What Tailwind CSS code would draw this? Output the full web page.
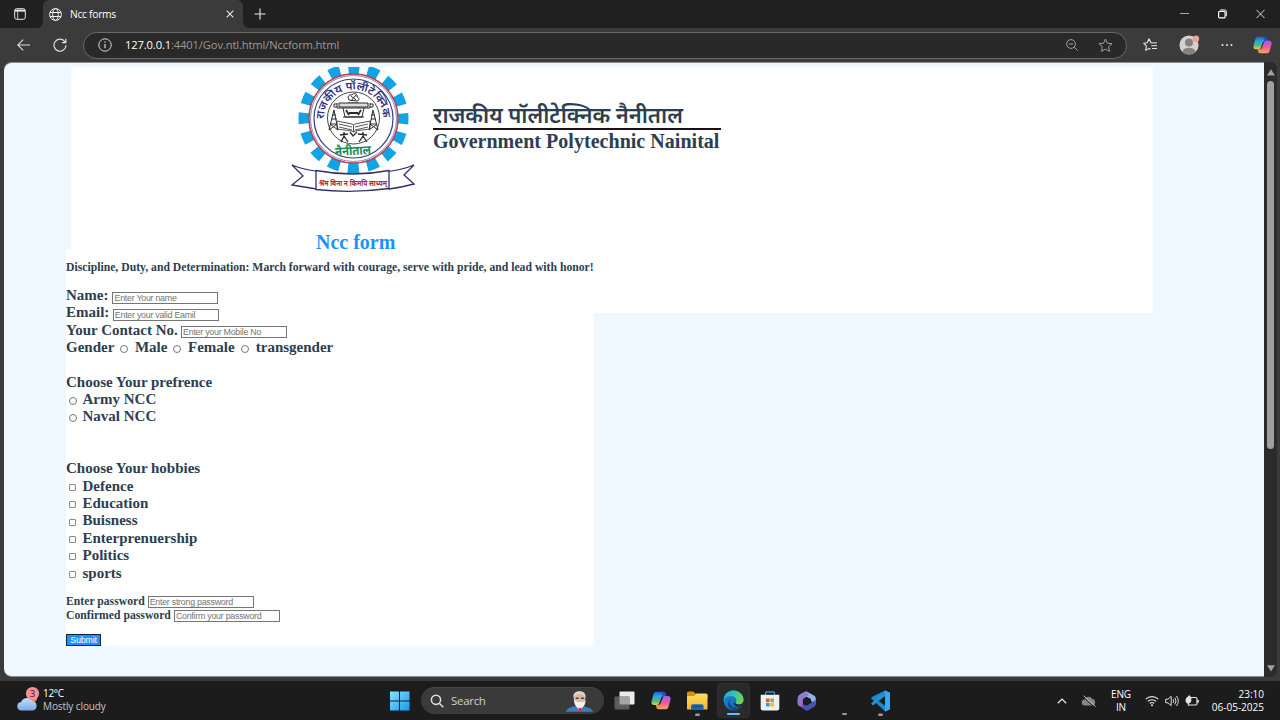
<!DOCTYPE html>
<html lang="en">
<head>
<meta charset="utf-8">
<title>Ncc forms</title>
<script src="https://cdn.jsdelivr.net/npm/@tailwindcss/browser@4"></script>
</head>
<body class="w-[1280px] h-[720px] overflow-hidden flex flex-col bg-[#3b3b3b] font-['Open_Sans','Noto_Sans',sans-serif] text-white">

<!-- Tab strip -->
<div class="h-7 shrink-0 bg-[#202020] flex items-center">
  <div class="w-[43px] h-7 bg-[#3b3b3b]"><div class="w-[43px] h-7 bg-[#202020] rounded-br-md flex items-center justify-end pr-[17px]">
    <svg class="w-3 h-3" viewBox="0 0 12 12" fill="none" stroke="#e8e8e8"><rect x=".7" y=".7" width="10.6" height="10.6" rx="2"/><path d="M1 2.6h10" stroke-width="2"/><path d="M3.7 3v8" stroke-width=".8"/></svg>
  </div></div>
  <div class="w-[200px] h-7 bg-[#3b3b3b] rounded-t-md flex items-center pl-1.5 pr-[9px]">
    <svg class="w-[13px] h-[13px]" viewBox="0 0 13 13" fill="none" stroke="#f0f0f0"><circle cx="6.5" cy="6.5" r="5.9"/><ellipse cx="6.5" cy="6.5" rx="2.8" ry="5.9"/><path d="M1 4.5h11M1 8.5h11"/></svg>
    <span class="ml-2 text-[10.300px] tracking-[-0.300px] leading-3 whitespace-nowrap">Ncc forms</span>
    <svg class="ml-auto w-2 h-2" viewBox="0 0 8 8" stroke="#e8e8e8" stroke-width="1.1"><path d="M.7.7l6.6 6.6M7.3.7L.7 7.3"/></svg>
  </div>
  <div class="w-[30px] h-7 bg-[#3b3b3b]"><div class="h-7 bg-[#202020] rounded-bl-md flex items-center justify-center pl-1">
    <svg class="w-3 h-3" viewBox="0 0 12 12" stroke="#e8e8e8" stroke-width="1.1"><path d="M6 .5v11M.5 6h11"/></svg>
  </div></div>
  <div class="ml-auto flex items-center gap-[29px] pr-[15px]">
    <svg class="w-[9px] h-[10px]" viewBox="0 0 9 10" stroke="#a8a8a8"><path d="M0 4.5h9"/></svg>
    <svg class="w-[9px] h-[10px]" viewBox="0 0 9 10" fill="none" stroke="#fff" stroke-width="1.2"><rect x=".6" y="2.400" width="6.500" height="6.500" rx="1"/><path d="M2.200.9h4.700q1.500 0 1.500 1.500v4.700" stroke-width=".9"/></svg>
    <svg class="w-[9px] h-[10px]" viewBox="0 0 9 10" stroke="#d8d8d8"><path d="M.5.9l8 8.2M8.5.9l-8 8.2"/></svg>
  </div>
</div>

<!-- Toolbar -->
<div class="h-[34px] shrink-0 bg-[#3b3b3b] flex items-center">
  <svg class="ml-[17px] w-[13px] h-[12px]" viewBox="0 0 13 12" fill="none" stroke="#e0e0e0" stroke-width="1.1"><path d="M13 6H.8M6.2.6L.8 6l5.4 5.4"/></svg>
  <svg class="ml-[23px] w-[14px] h-[14px]" viewBox="0 0 14 14" fill="none" stroke="#e0e0e0" stroke-width="1.2"><path d="M12.2 4.2A6 6 0 1 0 13 7.2M12.8.8v3.8H9"/></svg>
  <div class="ml-4 w-[1044px] h-[27px] rounded-full border border-[#6a6a6a] bg-[#292929] flex items-center pl-[14px] pr-[13px]">
    <svg class="w-[14px] h-[14px]" viewBox="0 0 14 14" fill="none" stroke="#d8d8d8"><circle cx="7" cy="7" r="6.2"/><path d="M7 6v4.3M7 3.6v1.2" stroke-width="1.2"/></svg>
    <span class="ml-[13px] text-[11.200px] tracking-[-0.135px] whitespace-nowrap text-[#9a9a9a] w-[215px]"><span class="text-white">127.0.0.1</span>:4401/Gov.ntl.html/Nccform.html</span>
    <svg class="ml-auto w-3 h-3" viewBox="0 0 12 12" fill="none" stroke="#a0a0a0"><circle cx="5" cy="5" r="4.4"/><path d="M8.2 8.2l3.4 3.4M2.8 5h4.4"/></svg>
    <svg class="ml-5 w-[15px] h-[15px]" viewBox="0 0 15 15" fill="none" stroke="#a0a0a0"><path d="M7.5 1l1.9 4.2 4.6.5-3.4 3.1.9 4.6-4-2.3-4 2.3.9-4.6L1 5.700l4.600-.5z" stroke-linejoin="round"/></svg>
  </div>
  <svg class="ml-4 w-[15px] h-[14px]" viewBox="0 0 15 14" fill="none" stroke="#e6e6e6" stroke-linejoin="round"><path d="M9 5L7.900 4.700 6 .8 4.300 4.700.7 5.200l2.700 2.900-.6 4.300L6 10.400l1.600.8" stroke-width="1.100"/><path d="M8.800 4.900H14M8.300 7.700H14M9 10.500h5"/></svg>
  <svg class="ml-[21px] w-[22px] h-[21px]" viewBox="0 0 22 21"><circle cx="10" cy="10" r="9.600" fill="#d4d0cc"/><circle cx="10" cy="7.500" r="4" fill="#85817d"/><path d="M3.500 16.800a6.600 5 0 0 1 13 0A9.600 9.600 0 0 1 3.500 16.800z" fill="#85817d"/><circle cx="17" cy="3.800" r="3.200" fill="#f2a09a"/></svg>
  <svg class="ml-5 w-3 h-3" viewBox="0 0 12 12" fill="#eee"><circle cx="1.500" cy="6" r="1"/><circle cx="6" cy="6" r="1"/><circle cx="10.500" cy="6" r="1"/></svg>
  <svg class="ml-5 w-[19px] h-[18px] shrink-0" viewBox="0 0 19 18"><defs>
    <linearGradient id="cpA" x1="0" y1="0" x2="0" y2="1"><stop offset="0" stop-color="#1b62d8"/><stop offset=".35" stop-color="#25a8dc"/><stop offset=".7" stop-color="#52b982"/><stop offset="1" stop-color="#e8cf3a"/></linearGradient>
    <linearGradient id="cpB" x1="0" y1="0" x2="0" y2="1"><stop offset="0" stop-color="#a35cf0"/><stop offset=".5" stop-color="#ee5a9c"/><stop offset="1" stop-color="#fba25c"/></linearGradient></defs>
    <path d="M5 .8h6.700c1.800 0 2 .9 2.400 2.500L14.500 5h-2.600c-1.500 0-2 .7-2.400 2L8 11.200c-.6 1.500-1.200 2-2.500 2H3c-2.300 0-3-1.600-2.400-3.800L2.300 3.300C2.800 1.600 3.500.8 5 .8z" fill="url(#cpA)"/>
    <path d="M9.700.8h2c1.800 0 2 .9 2.400 2.500L14.500 5h-3z" fill="#1b50bd"/>
    <path d="M14 17.200H7.300c-1.800 0-2-.9-2.400-2.500l-.4-1.500h2.300c1.500 0 2-.7 2.400-2L11 6.800c.6-1.500 1.200-2 2.500-2H16c2.300 0 3 1.600 2.400 3.800l-1.700 6.100c-.5 1.700-1.200 2.500-2.700 2.500z" fill="url(#cpB)"/></svg>
</div>

<!-- Page viewport -->
<div class="h-[619px] shrink-0 flex pl-1 bg-[#3b3b3b]">
  <div class="w-[1260px] h-[615px] rounded-l-lg bg-[#f0f8ff] overflow-hidden pt-[5px] border-t border-b border-[#8b8e91] font-['Liberation_Serif',serif] font-bold text-[#2c3e50]">
    <header class="ml-[67px] w-[1082px] h-[246px] bg-white flex pl-[220px] -mt-px">
      <svg class="w-[124px] h-[125px] shrink-0" viewBox="0 0 124 125">
        <circle cx="62.500" cy="51.500" r="49.500" fill="none" stroke="#10a4e4" stroke-width="11" stroke-dasharray="11 8.438" stroke-dashoffset="5.500"/>
        <circle cx="62.500" cy="51.500" r="44.500" fill="#fff" stroke="#b34654" stroke-width="1.500"/>
        <circle cx="62.500" cy="51.500" r="43" fill="none" stroke="#3c3c85" stroke-width=".6"/>
        <circle cx="62.500" cy="51.500" r="39.500" fill="none" stroke="#3c3c85" stroke-width="1.200"/>
        <circle cx="62.500" cy="51" r="26" fill="#fff" stroke="#333" stroke-width=".9"/>
        <path id="arc" d="M35.500 64A29.500 29.500 0 1 1 89.500 64" fill="none"/>
        <text font-family="Noto Sans, sans-serif" font-size="11.300" font-weight="600" fill="#30307c"><textPath href="#arc" startOffset="12">राजकीय पॉलीटेक्निक</textPath></text>
        <g fill="none" stroke="#2c2c2c" stroke-width="1">
          <path d="M46 36v5h33v-5M46 37h-3v3h3M79 37h3v3h-3M52 41l2 9h17l2-9M57 36h11v5M52 50h21" />
          <path d="M48 36h29v4H48z" fill="#ddd"/>
          <path d="M58 46h9M55 43l3 5M70 43l-3 5" stroke-width="1.800"/>
          <path d="M58 33c-2-3 0-6 3-5 2-3 6-1 5 2 3 1 2 4 0 4zM60 29l5 4M65 28l-5 6"/>
          <path d="M46 54l15 3 1.500 1 1.500-1 15-3v8l-15 2-1.500 1-1.500-1-15-2zM62.500 58v7M48 57l13 3M48 60l13 3M77 57l-13 3M77 60l-13 3" stroke-width=".8"/>
          <path d="M43 43l-5 20M43 43l4 20M39 57h7M40 52h6M41 48h4M39 57l8 6M38 63l8-6M82 43l-4 20M82 43l5 20M79 57h7M80 52h5M80 48h4M79 57l8 6M78 63l8-6"/>
          <path d="M53 65v4l-3 6M53 69l4 6M49 68l8-1M72 65v4l-4 6M72 69l4 6M67 67l9 1M59 65l3 4 4-4" stroke-width="1.300"/>
        </g>
        <text x="44" y="88" transform="rotate(-3 62 84)" font-family="Noto Sans, sans-serif" font-size="12.500" font-weight="700" fill="#168a58" textLength="36" lengthAdjust="spacingAndGlyphs">नैनीताल</text>
        <g fill="#fff" stroke="#31306f" stroke-width="1.300" stroke-linejoin="miter">
          <path d="M1 98q14 6 34 7l-9 17Q13 120 1 118l11-9z"/>
          <path d="M123 98q-14 6-33 7l8 17q14-2 25-5l-10-9z"/>
          <path d="M25 103.500q37 7 73 0v18q-37 5-73 1z"/>
        </g>
        <text x="28" y="119" font-family="Noto Sans, sans-serif" font-size="8.500" font-weight="700" fill="#a52d37" textLength="68" lengthAdjust="spacingAndGlyphs">श्रम बिना न किमपि साध्यम्</text>
      </svg>
      <div class="ml-[18px] pt-[35px]">
        <div class="w-[288px] h-[28px] border-b-2 border-[#1a1018] text-[22px] leading-[27px] whitespace-nowrap font-semibold tracking-[-0.100px]"><span class="font-['Noto_Sans_Devanagari','Noto_Sans',sans-serif]">राजकीय पॉलीटेक्निक नैनीताल</span></div>
        <div class="-mt-px text-[20px] tracking-[0.030px] leading-[24px] whitespace-nowrap">Government Polytechnic Nainital</div>
      </div>
    </header>

    <form class="relative flow-root -mt-[64px] ml-[62px] w-[528px] h-[397px] bg-white text-[15px] leading-[17.350px] whitespace-nowrap">
      <h1 class="pl-[250px] -mt-[19px] pt-px text-[20px] leading-[22px] text-[#1e90ff]">Ncc form</h1>
      <p class="mt-[8px] text-[11.700px] leading-[14px]">Discipline, Duty, and Determination: March forward with courage, serve with pride, and lead with honor!</p>
      <div class="mt-[12px] h-[17.350px] flex items-center">Name:<span class="ml-1 mt-1 w-[106px] h-[12px] border border-[#767676] bg-white pl-px font-['Liberation_Sans',sans-serif] font-normal text-[8.900px] tracking-[-0.270px] leading-[10px] text-[#757575]">Enter Your name</span></div>
      <div class="h-[17.350px] flex items-center">Email:<span class="ml-[3.500px] mt-1 w-[106px] h-[12px] border border-[#767676] bg-white pl-px font-['Liberation_Sans',sans-serif] font-normal text-[8.900px] tracking-[-0.270px] leading-[10px] text-[#757575]">Enter your valid Eamil</span></div>
      <div class="h-[17.350px] flex items-center">Your Contact No.<span class="ml-[3.300px] mt-1 w-[106px] h-[12px] border border-[#767676] bg-white pl-px font-['Liberation_Sans',sans-serif] font-normal text-[8.900px] tracking-[-0.270px] leading-[10px] text-[#757575]">Enter your Mobile No</span></div>
      <div class="h-[17.350px] flex items-center">Gender<i class="ml-1.5 mr-[6.600px] mt-0.5 w-2 h-2 rounded-full border border-[#767676]"></i>Male<i class="ml-1.5 mr-[6.600px] mt-0.5 w-2 h-2 rounded-full border border-[#767676]"></i>Female<i class="ml-[6.500px] mr-[6.600px] mt-0.5 w-2 h-2 rounded-full border border-[#767676]"></i>transgender</div>
      <div class="mt-[17.350px] h-[17.350px]">Choose Your prefrence</div>
      <div class="h-[17.350px] flex items-center"><i class="ml-[3px] mr-[5.500px] mt-0.5 w-2 h-2 rounded-full border border-[#767676]"></i>Army NCC</div>
      <div class="h-[17.350px] flex items-center"><i class="ml-[3px] mr-[5.500px] mt-0.5 w-2 h-2 rounded-full border border-[#767676]"></i>Naval NCC</div>
      <div class="mt-[34.700px] h-[17.350px]">Choose Your hobbies</div>
      <div class="h-[17.350px] flex items-center"><i class="ml-[3px] mr-[6.500px] mt-0.5 w-[7px] h-[7px] rounded-[1px] border border-[#8a8a8a]"></i>Defence</div>
      <div class="h-[17.350px] flex items-center"><i class="ml-[3px] mr-[6.500px] mt-0.5 w-[7px] h-[7px] rounded-[1px] border border-[#8a8a8a]"></i>Education</div>
      <div class="h-[17.350px] flex items-center"><i class="ml-[3px] mr-[6.500px] mt-0.5 w-[7px] h-[7px] rounded-[1px] border border-[#8a8a8a]"></i>Buisness</div>
      <div class="h-[17.350px] flex items-center"><i class="ml-[3px] mr-[6.500px] mt-0.5 w-[7px] h-[7px] rounded-[1px] border border-[#8a8a8a]"></i>Enterprenuership</div>
      <div class="h-[17.350px] flex items-center"><i class="ml-[3px] mr-[6.500px] mt-0.5 w-[7px] h-[7px] rounded-[1px] border border-[#8a8a8a]"></i>Politics</div>
      <div class="h-[17.350px] flex items-center"><i class="ml-[3px] mr-[6.500px] mt-0.5 w-[7px] h-[7px] rounded-[1px] border border-[#8a8a8a]"></i>sports</div>
      <div class="mt-[13px] h-[14px] flex items-center text-[11.700px]">Enter password<span class="ml-[3px] mt-px w-[106px] h-[12px] border border-[#767676] bg-white pl-px font-['Liberation_Sans',sans-serif] font-normal text-[8.900px] tracking-[-0.270px] leading-[10px] text-[#757575]">Enter strong password</span></div>
      <div class="h-[14px] flex items-center text-[11.700px]">Confirmed password<span class="ml-[3px] mt-px w-[106px] h-[12px] border border-[#767676] bg-white pl-px font-['Liberation_Sans',sans-serif] font-normal text-[8.900px] tracking-[-0.270px] leading-[10px] text-[#757575]">Confirm your password</span></div>
      <div class="mt-[11px] w-[35px] h-[12px] border border-[#10243a] bg-[#1e90ff] text-center font-['Liberation_Sans',sans-serif] font-normal text-[8.900px] tracking-[-0.200px] leading-[10px] text-white">Submit</div>
    </form>
  </div>
  <div class="w-[13px] h-[615px] bg-[#2b2b2b] rounded-r-md flex flex-col items-center">
    <svg class="mt-[7px] w-2 h-[7px]" viewBox="0 0 8 7" fill="#9f9f9f"><path d="M4 .3L8 6.500H0z"/></svg>
    <div class="mt-[5px] w-[7px] h-[368px] rounded-full bg-[#9f9f9f]"></div>
    <svg class="mt-auto mb-[5px] w-2 h-[7px]" viewBox="0 0 8 7" fill="#9f9f9f"><path d="M4 6.500L8 .3H0z"/></svg>
  </div>
</div>

<!-- Taskbar -->
<div class="h-[39px] shrink-0 bg-[#1c1c1c] flex items-center">
  <div class="w-[389px] flex items-center pl-4">
    <svg class="-mt-[5px] w-6 h-[26px]" viewBox="0 0 24 26"><defs><linearGradient id="cl" x1="0" y1="0" x2="0" y2="1"><stop offset="0" stop-color="#c6dcf8"/><stop offset="1" stop-color="#7fabe8"/></linearGradient></defs><circle cx="17" cy="13" r="4" fill="#f08a38"/><path d="M5 25.500a4.300 4.300 0 0 1 0-8.500A6.500 6.500 0 0 1 16.500 16a4.800 4.800 0 0 1 0 9.500z" fill="url(#cl)"/><circle cx="16.500" cy="8.500" r="6.600" fill="#f78f98"/><text x="16.500" y="12" text-anchor="middle" font-family="Open Sans, sans-serif" font-size="9.500" fill="#38181b">3</text></svg>
    <div class="ml-[3px] -mt-px text-[10px] tracking-[-0.100px] leading-[13.500px] whitespace-nowrap"><div class="tracking-[-0.300px]">12°C</div><div class="text-[#c6c6c6]">Mostly cloudy</div></div>
  </div>
  <svg class="w-[21px] h-5" viewBox="0 0 21 20"><defs><linearGradient id="wn" x1="0" y1="0" x2="1" y2="1"><stop offset="0" stop-color="#83e4ff"/><stop offset="1" stop-color="#1698f0"/></linearGradient></defs><path d="M1 .5h9v9H1zM11 .5h9.500v9H11zM1 10.500h9v9H1zM11 10.500h9.500v9H11z" fill="url(#wn)"/></svg>
  <div class="ml-[11px] w-[183px] h-[27px] rounded-full bg-[#3a3a3a] border-t border-[#484848] flex items-center pl-[9px] pr-2.5">
    <svg class="w-[14px] h-[14px]" viewBox="0 0 14 14" fill="none" stroke="#e0e0e0" stroke-width="1.500"><circle cx="6" cy="5.800" r="4.600"/><path d="M9.300 9.300l4 4"/></svg>
    <span class="ml-[7px] text-[11.500px] tracking-[-0.300px] text-[#d0d0d0]">Search</span>
    <svg class="ml-auto w-[29px] h-[23px]" viewBox="0 0 31 24"><path d="M1 23c1-4 5-5 9-6h9c5 1 10 2 11 6z" fill="#3d7dbd"/><path d="M12 16l3.500 7 4-7z" fill="#f1f1f1"/><path d="M14.800 18h2l.8 5h-3.500z" fill="#c23636"/><ellipse cx="15.500" cy="9" rx="6.200" ry="7.500" fill="#e4b79d"/><path d="M9.200 8C8 3 12 1 15.500 1s7.500 2 6.300 7.500C20.500 4.500 18 4 15.500 4S11 4.500 9.200 8z" fill="#d9d9da"/><path d="M9.500 10c.5 6 3 9 6.500 9s6-3.500 6-9c-1.500 3-3 2.500-5.500 2.500S11 12.500 9.500 10z" fill="#f1f1f1"/><path d="M11.500 8.500h3.200M17 8.500h3.200" stroke="#54413a" stroke-width="1.500"/></svg>
  </div>
  <svg class="ml-[10px] w-[21px] h-[19px]" viewBox="0 0 21 19"><rect x="5.500" y=".5" width="15" height="13" rx="1" fill="#ececec"/><rect x=".5" y="5.500" width="15" height="13" rx="1" fill="#5b5b5b"/><path d="M5.500 5.500h10v8h-10z" fill="#a4a4a4"/></svg>
  <svg class="ml-4 w-[20px] h-[19px]" viewBox="0 0 19 18">
    <path d="M5 .8h6.700c1.800 0 2 .9 2.400 2.500L14.500 5h-2.600c-1.500 0-2 .7-2.400 2L8 11.200c-.6 1.500-1.200 2-2.500 2H3c-2.300 0-3-1.600-2.400-3.800L2.300 3.300C2.800 1.600 3.500.8 5 .8z" fill="url(#cpA)"/>
    <path d="M9.700.8h2c1.800 0 2 .9 2.400 2.500L14.500 5h-3z" fill="#1b50bd"/>
    <path d="M14 17.200H7.300c-1.800 0-2-.9-2.400-2.500l-.4-1.500h2.300c1.500 0 2-.7 2.400-2L11 6.800c.6-1.500 1.200-2 2.500-2H16c2.300 0 3 1.600 2.400 3.800l-1.700 6.100c-.5 1.700-1.200 2.500-2.700 2.500z" fill="url(#cpB)"/></svg>
  <svg class="ml-4 w-[21px] h-[34px]" viewBox="0 0 21 34"><defs><linearGradient id="fd" x1="0" y1="0" x2="0" y2="1"><stop offset="0" stop-color="#ffdb63"/><stop offset="1" stop-color="#f3b82c"/></linearGradient></defs><path d="M0 10V9q0-1.500 1.500-1.500h5L9 10h10q1.500 0 1.500 1.500V14H0z" fill="#d3930f"/><path d="M0 12h7L9.500 9.500H19q1.500 0 1.500 1.500v14.500H0z" fill="url(#fd)"/><path d="M4 26v-4q0-1.800 1.800-1.800h9q1.800 0 1.800 1.800v4z" fill="#1669b5"/><path d="M6.500 22.500h8" stroke="#0b4684"/><rect x="8" y="29.500" width="5" height="2.500" rx="1.200" fill="#9a9a9a"/></svg>
  <div class="ml-[9px] w-[33px] h-[35px] rounded bg-[#2a2a2a] border border-[#303030] flex flex-col items-center">
    <svg class="mt-[6px] w-[21px] h-[21px] shrink-0" viewBox="0 0 21 21"><defs><linearGradient id="ea" x1="0" y1="0" x2="1" y2=".3"><stop offset="0" stop-color="#2fa5df"/><stop offset=".55" stop-color="#36c0b4"/><stop offset="1" stop-color="#6bd650"/></linearGradient><linearGradient id="eb" x1="0" y1="0" x2="1" y2="1"><stop offset="0" stop-color="#1c8fd8"/><stop offset="1" stop-color="#0c5aa8"/></linearGradient></defs>
      <circle cx="10.500" cy="10.500" r="10" fill="url(#eb)"/><path d="M.6 9.500C1.500 3 6 .5 10.500.5c6 0 10 4.500 10 9 0 3.500-2.500 5-5 5-2 0-3.300-.9-3-1.900.8-1 1-1.800.8-2.900C13 7.500 10.500 6 7.500 6 4.500 6 2 7.500.6 9.500z" fill="url(#ea)"/><path d="M8 9c-1.500 1.500-1.800 3.500-.8 5.500 1.500 3.300 6 4.300 11.300 1.500C15 21.500 9 21 6.300 17.500 4 14.500 5 11 8 9z" fill="#11478e"/><path d="M12.500 12.600c-.3 1 1 1.900 3 1.900 1.700 0 3.700-.6 5.500-1.800l-1.800 3.300c-3.500 1.500-8 .5-8.500-2.500z" fill="#2a2a2a"/></svg>
    <div class="mt-auto mb-0.5 w-[13px] h-[2px] rounded-full bg-[#60c2f0]"></div>
  </div>
  <svg class="ml-[10px] w-5 h-5" viewBox="0 0 20 20"><path d="M5.500 4.500V2Q5.500 1 6.500 1h7q1 0 1 1v2.500" fill="none" stroke="#3698c8" stroke-width="1.300"/><path d="M.7 3.700h18.600V17q0 2.500-2.500 2.500H3.200Q.7 19.500.7 17z" fill="#efefef"/><path d="M6 7.500h3.600v3.600H6z" fill="#e75a30"/><path d="M10.400 7.500H14v3.600h-3.600z" fill="#7eb93a"/><path d="M6 11.900h3.600v3.600H6z" fill="#2e9fe4"/><path d="M10.400 11.900H14v3.600h-3.600z" fill="#f6b92a"/></svg>
  <svg class="ml-[17px] w-5 h-5" viewBox="0 0 20 20"><path d="M9 .3l8 4.200q1.800 1 1.800 3v5.500L14 10V8L6 4z" fill="#8cb5ee"/><path d="M9 .3Q4 2 1.500 4.500.7 5.500.7 7v6l5 2.500V9.500q0-1.500 1.300-2.300L12 4.500z" fill="#8d7bd6"/><path d="M.7 12q0 2 1.500 3l6 4q1.800 1 3.600 0l5.500-3.200q1.500-1 1.500-3V9l-5 3-4 2.500z" fill="#4a52b8"/><path d="M.7 8v5q.3 1.500 1.500 2l3.500.5V10z" fill="#a16bcc"/><path d="M9.800 6.500l3.500 2v3.500l-3.500 2-3.500-2V8.500z" fill="#1c1c1c"/></svg>
  <div class="ml-[25px] mt-[27px] w-[5px] h-[2.500px] rounded-full bg-[#9a9a9a]"></div>
  <svg class="ml-[23px] w-[21px] h-[34px]" viewBox="0 0 21 34"><path d="M15 6.500l5 2.300v16.500l-5 2.200L1 14.200 2.800 12.500z" fill="#1f86c9"/><path d="M1 19.500l2 2L15 12V6.500z" fill="#2390d5"/><path d="M15 6.500l5 2.300v16.500l-5 2.200z" fill="#35aaf0"/><path d="M8.700 17l6.300-4.800v9.600z" fill="#1c1c1c"/><rect x="8" y="29.500" width="5" height="2.500" rx="1.200" fill="#9a9a9a"/></svg>
  <div class="ml-auto flex items-center pr-4 text-[10px] leading-[13px] whitespace-nowrap">
    <svg class="w-[10px] h-[6px]" viewBox="0 0 10 6" fill="none" stroke="#e6e6e6" stroke-width="1.300"><path d="M.8 5.300L5 1.100l4.200 4.200"/></svg>
    <svg class="ml-[14px] w-[15px] h-[12px]" viewBox="0 0 15 12"><path d="M4 10.500a3 3 0 0 1-.5-6 4.300 4.300 0 0 1 7.800-.5 3.300 3.300 0 0 1 .2 6.500z" fill="#858585"/><path d="M1.500 1.500l12 10.800" stroke="#1c1c1c" stroke-width="1"/><path d="M2.500.7l12 10.800" stroke="#c0c0c0"/></svg>
    <div class="ml-[14px] w-[22px] tracking-[-0.200px] text-center flex flex-col items-center"><span>ENG</span><span>IN</span></div>
    <svg class="ml-[13px] w-[14px] h-[12px]" viewBox="0 0 14 12" fill="none" stroke="#e6e6e6" stroke-width="1.100"><path d="M.7 4.200a9 9 0 0 1 12.600 0M2.800 6.400a6 6 0 0 1 8.400 0M4.800 8.500a3.200 3.200 0 0 1 4.400 0"/><circle cx="7" cy="10.300" r="1" fill="#e6e6e6" stroke="none"/></svg>
    <svg class="ml-[6px] w-[14px] h-[12px]" viewBox="0 0 14 12" fill="none" stroke="#e0e0e0"><path d="M.7 4.200h2.300L6.200 1.300v9.400L3 7.800H.7z"/><path d="M8 4.200q1.300 1.800 0 3.600M9.800 2.600q2.400 3.400 0 6.800M11.500 1q3.500 5 0 10"/></svg>
    <svg class="ml-[6px] w-[14px] h-[12px]" viewBox="0 0 14 12" fill="none" stroke="#e6e6e6"><path d="M5.500 2.500h5q1.500 0 1.500 1.500v4.500q0 1.500-1.500 1.500H4M13.300 5v2.500" stroke-width="1.200"/><path d="M4.500.7C2 2 .7 4 1 6q.4 2.300 2.300 2.300Q6 8 6 4.800 6 2.500 4.500.7zM3.300 5v6" fill="#e6e6e6"/></svg>
    <div class="ml-[13px] flex flex-col items-end w-[52px]"><span>23:10</span><span>06-05-2025</span></div>
  </div>
</div>
</body>
</html>
